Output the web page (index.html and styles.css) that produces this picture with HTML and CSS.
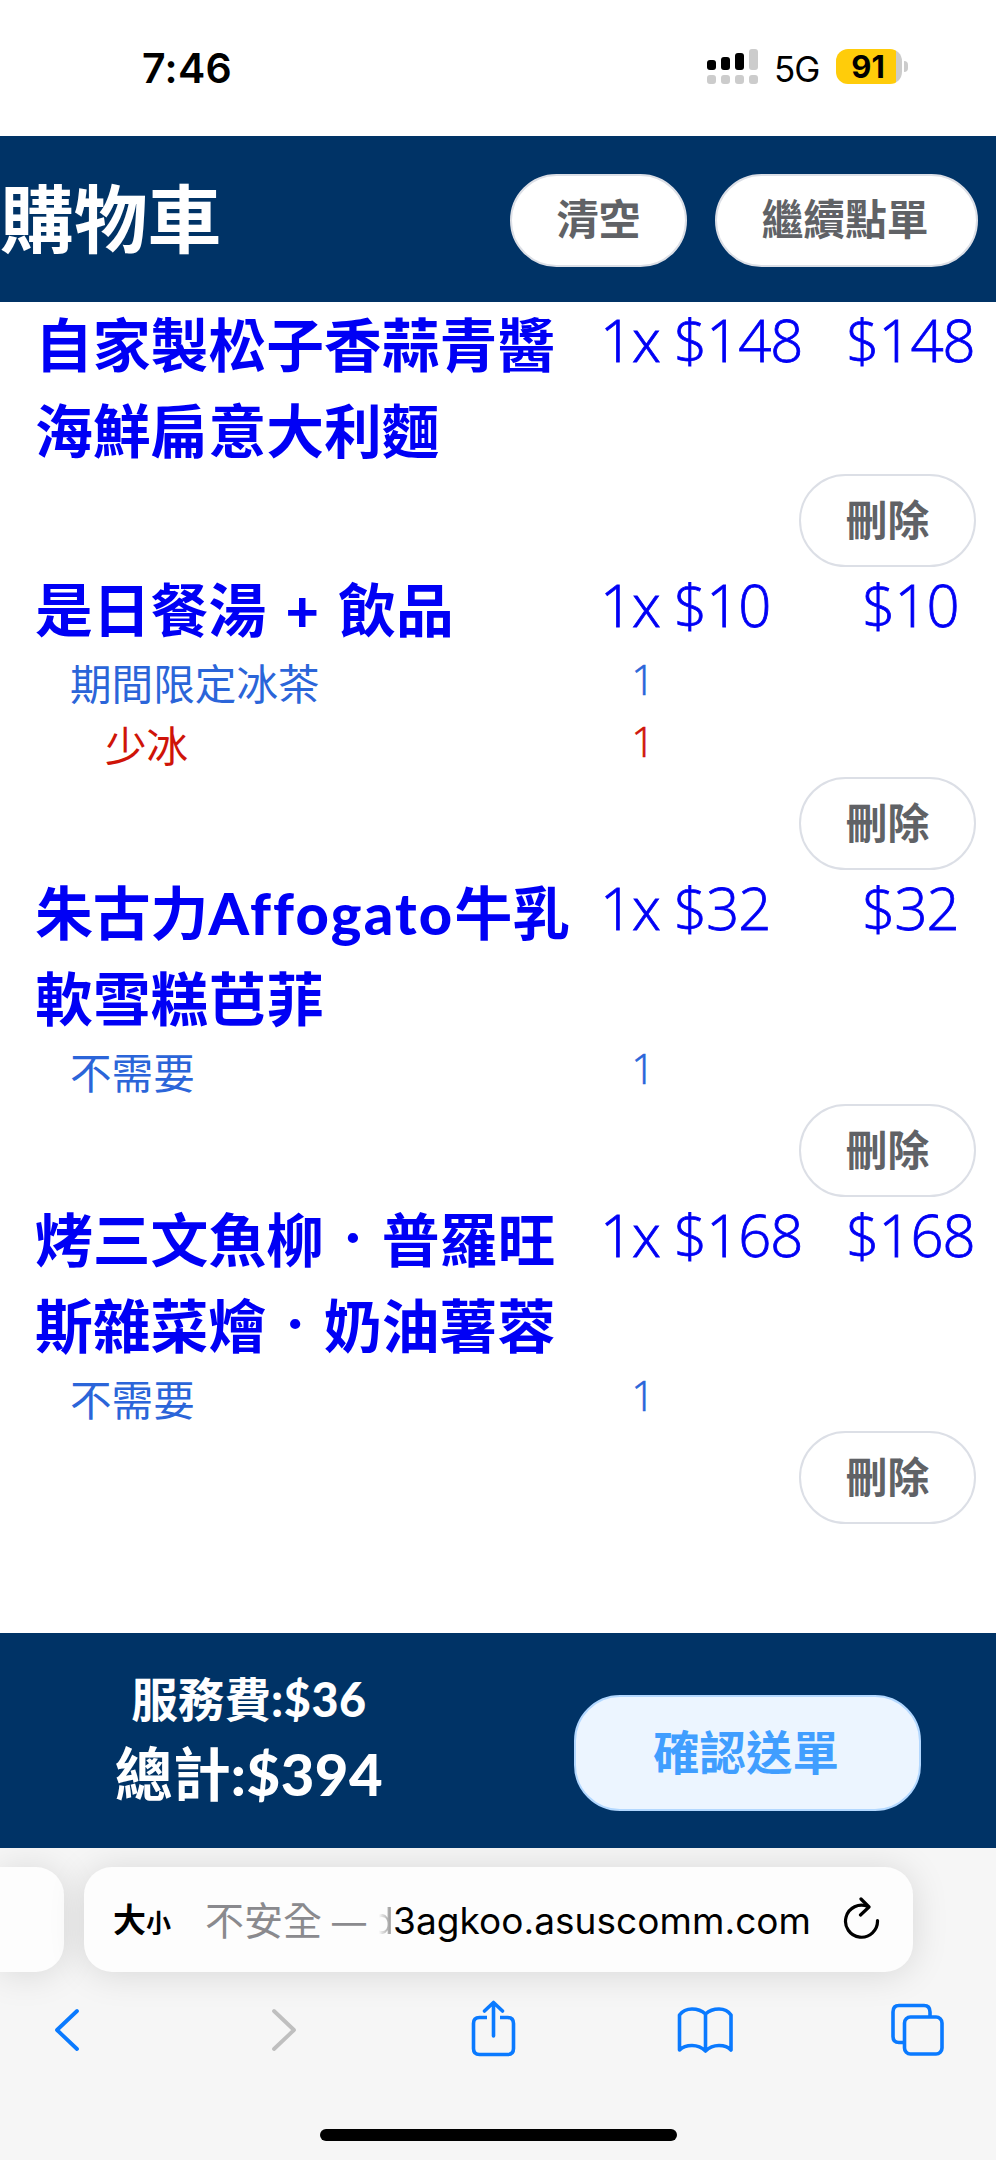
FILE: index.html
```html
<!DOCTYPE html>
<html lang="zh-Hant">
<head>
<meta charset="utf-8">
<title>購物車</title>
<link rel="stylesheet" href="styles.css">
</head>
<body>
<div class="status">
  <span class="clock">7:46</span>
  <div class="indicators">
    <svg class="signal" width="52" height="36" viewBox="0 0 52 36">
      <g fill="#000"><rect x="0" y="11" width="9" height="10" rx="3"/><rect x="14" y="8" width="9" height="13" rx="3"/><rect x="28" y="4" width="9" height="17" rx="3"/></g>
      <g fill="#ccc"><rect x="42" y="0" width="9" height="21" rx="3"/><rect x="0" y="26" width="9" height="9" rx="3"/><rect x="14" y="26" width="9" height="9" rx="3"/><rect x="28" y="26" width="9" height="9" rx="3"/><rect x="42" y="26" width="9" height="9" rx="3"/></g>
    </svg>
    <span class="net">5G</span>
    <span class="battery">91</span>
    <i class="nub"></i>
  </div>
</div>
<header class="header">
  <h1 class="title">購物車</h1>
  <button class="pill">清空</button>
  <button class="pill wide">繼續點單</button>
</header>
<main class="cart">
  <section class="item">
    <div class="row"><div class="name">自家製松子香蒜青醬<br>海鮮扁意大利麵</div><div class="unit">1x $148</div><div class="sum">$148</div></div>
    <button class="pill">刪除</button>
  </section>
  <section class="item">
    <div class="row"><div class="name">是日餐湯<span class="plus"> + </span>飲品</div><div class="unit">1x $10</div><div class="sum">$10</div></div>
    <div class="opt"><span class="label">期間限定冰茶</span><span class="qty">1</span></div>
    <div class="opt red"><span class="label">少冰</span><span class="qty">1</span></div>
    <button class="pill">刪除</button>
  </section>
  <section class="item">
    <div class="row"><div class="name">朱古力<span class="latin">Affogato</span>牛乳<br>軟雪糕芭菲</div><div class="unit">1x $32</div><div class="sum">$32</div></div>
    <div class="opt"><span class="label">不需要</span><span class="qty">1</span></div>
    <button class="pill">刪除</button>
  </section>
  <section class="item">
    <div class="row"><div class="name">烤三文魚柳<span class="dot">·</span>普羅旺<br>斯雜菜燴<span class="dot">·</span>奶油薯蓉</div><div class="unit">1x $168</div><div class="sum">$168</div></div>
    <div class="opt"><span class="label">不需要</span><span class="qty">1</span></div>
    <button class="pill">刪除</button>
  </section>
</main>
<footer class="checkout">
  <div class="totals"><div class="fee">服務費<span class="money">:$36</span></div><div class="total">總計<span class="money">:$394</span></div></div>
  <button class="confirm">確認送單</button>
</footer>
<div class="browser">
  <div class="tabs">
    <div class="prev"></div>
    <div class="address">
      <span class="big">大</span><span class="small">小</span>
      <span class="insecure">不安全 <span class="dash">—</span></span>
      <span class="cut">d</span><span class="domain">3agkoo.asuscomm.com</span>
      <svg class="reload" width="38" height="44" viewBox="0 0 38 44" fill="none" stroke="#000" stroke-width="3.2" stroke-linecap="round" stroke-linejoin="round"><path d="M25 9.6 A16 16 0 1 0 34.5 23.5"/><path d="M18 2 L26 10 L17.5 18"/></svg>
    </div>
  </div>
  <nav class="tools">
    <svg width="996" height="70" viewBox="0 1990 996 70" fill="none" stroke="#0a7aff" stroke-width="3.6" stroke-linecap="round" stroke-linejoin="round">
      <path stroke-width="3.8" d="M77 2011 L57 2030 L77 2049"/>
      <path stroke="#bfbfbf" stroke-width="3.8" d="M274 2011 L294 2030 L274 2049"/>
      <path stroke-linecap="butt" d="M487 2017.500 H479.500 Q473.500 2017.500 473.500 2023.500 V2048.500 Q473.500 2054.500 479.500 2054.500 H507.500 Q513.500 2054.500 513.500 2048.500 V2023.500 Q513.500 2017.500 507.500 2017.500 H500"/>
      <path d="M493.500 2036 V2003 M484.500 2011 L493.500 2002.500 L502.500 2011"/>
      <path d="M705.500 2014 Q700 2009 692 2009 Q684 2009 679.500 2015 V2050 Q684 2045.500 692 2045.500 Q700 2045.500 705.500 2051 Q711 2045.500 719 2045.500 Q727 2045.500 731 2050 V2015 Q727 2009 719 2009 Q711 2009 705.500 2014 V2051"/>
      <path stroke-linecap="butt" d="M904 2042.500 H899 Q893 2042.500 893 2036.500 V2012 Q893 2005.500 899 2005.500 H924 Q930 2005.500 930 2012 V2017"/>
      <rect x="904.500" y="2017" width="37.500" height="37" rx="6"/>
    </svg>
  </nav>
  <div class="home"></div>
</div>
</body>
</html>
```
FILE: styles.css
```css
* { box-sizing: border-box; }
body { margin: 0; width: 996px; height: 2160px; overflow: hidden; background: #fff; font-family: "Open Sans", "Noto Sans CJK TC", sans-serif; }
button { font-family: inherit; margin: 0; padding: 0; }
.status { height: 136px; display: flex; justify-content: space-between; padding: 49px 88px 0 142px; font-family: Inter, sans-serif; color: #000; }
.clock { font-size: 41px; line-height: 39px; font-weight: 600; letter-spacing: 0.3px; }
.indicators { display: flex; height: 36px; }
.net { width: 62px; margin-left: 15px; font-size: 35px; line-height: 40px; letter-spacing: -1px; }
.battery { width: 66px; height: 35px; border-radius: 12px; background: linear-gradient(90deg, #ffcc0a 60px, #ccc 60px); font-size: 31px; line-height: 35px; font-weight: 700; text-align: center; padding-right: 2px; }
.nub { width: 4px; height: 11px; margin: 12px 0 0 2px; border-radius: 0 5px 5px 0; background: #ccc; }
.header { height: 166px; background: #003366; display: flex; align-items: center; padding-right: 18px; }
.title { margin: 0 auto 0 0; color: #fff; font-size: 73.800px; font-weight: 700; line-height: 100px; font-family: "Noto Sans CJK TC", sans-serif; padding-bottom: 8px; }
.pill { display: block; width: 177px; height: 93px; border: 2px solid #dcdfe6; border-radius: 47px; background: #fff; color: #606266; font-size: 41.800px; font-weight: 700; line-height: 80px; font-family: "Noto Sans CJK TC", sans-serif; padding-bottom: 6px; }
.header .pill { margin-top: 2px; }
.header .wide { width: 263px; margin-left: 28px; padding-right: 3px; }
.cart { height: 1331px; }
.item > .pill { margin-left: 799px; }
.row { display: grid; grid-template-columns: 565px 231px 159px; padding-left: 35px; color: #0000f5; font-size: 58px; line-height: 86px; }
.name { font-size: 57.800px; font-weight: 700; font-family: "Noto Sans CJK TC", sans-serif; white-space: nowrap; margin: -3px 0 3px; }
.latin { font-family: Lato, sans-serif; font-weight: 900; line-height: 0; letter-spacing: 2.200px; font-variant-ligatures: none; }
.plus { font-family: Lato, sans-serif; font-weight: 900; line-height: 0; white-space: pre; word-spacing: 5.500px; }
.dot { display: inline-block; width: 57.800px; height: 20px; line-height: 20px; text-align: center; font-family: Lato, sans-serif; font-size: 54px; vertical-align: 8px; }
.unit, .sum { height: 86px; line-height: 75px; font-weight: 300; letter-spacing: -1px; white-space: nowrap; -webkit-text-stroke: 0.8px currentColor; }
.sum { text-align: center; }
.opt { display: grid; grid-template-columns: 598px 90px; height: 62px; line-height: 58px; font-size: 41.600px; color: #2b65d9; font-weight: 300; }
.label { padding-left: 70px; font-family: "Noto Sans CJK TC", sans-serif; font-weight: 400; }
.red { color: #cf1408; }
.red .label { padding-left: 105px; }
.qty { text-align: center; line-height: 53px; -webkit-text-stroke: 0.6px currentColor; }
.checkout { height: 215px; background: #003366; display: flex; color: #fff; font-weight: 700; }
.totals { width: 498px; padding-top: 25px; text-align: center; font-family: "Noto Sans CJK TC", sans-serif; }
.fee { font-size: 46.600px; line-height: 78px; margin-bottom: -4px; }
.total { font-size: 58px; line-height: 78px; }
.money { font-family: Lato, sans-serif; font-weight: 900; line-height: 0; letter-spacing: 0.6px; }
.confirm { width: 347px; height: 116px; margin: 62px 0 0 76px; border: 2px solid #b3d8ff; border-radius: 46px; background: #ecf5ff; color: #409eff; font-size: 46.400px; font-weight: 700; font-family: "Noto Sans CJK TC", sans-serif; padding: 0 3px 7px 0; }
.browser { height: 312px; background: #f6f6f6; overflow: hidden; font-family: Inter, "Noto Sans CJK TC", sans-serif; }
.tabs { display: flex; gap: 20px; padding-top: 19px; }
.prev { width: 64px; height: 105px; border-radius: 0 28px 28px 0; background: #fdfdfd; box-shadow: 0 2px 36px rgba(0,0,0,.13); }
.address { width: 829px; height: 105px; border-radius: 28px; background: #fdfdfd; box-shadow: 0 2px 36px rgba(0,0,0,.13); display: flex; padding-left: 29px; line-height: 107px; white-space: nowrap; font-size: 37px; }
.big { width: 33px; font-size: 33px; font-weight: 700; }
.small { width: 59px; font-size: 25px; font-weight: 700; line-height: 113px; }
.insecure { width: 166px; color: #8a8a8e; font-size: 39px; }
.dash { display: inline-block; font-size: 34px; line-height: 1; margin-left: -1px; }
.cut { width: 22px; font-size: 37px; color: transparent; background: linear-gradient(90deg, transparent 35%, #888 100%); -webkit-background-clip: text; background-clip: text; }
.domain { width: 450px; letter-spacing: 0.05px; }
.reload { margin-top: 30px; }
.tools { height: 70px; margin-top: 18px; }
.home { width: 357px; height: 12px; margin: 69px auto 0; border-radius: 6px; background: #000; }
```
